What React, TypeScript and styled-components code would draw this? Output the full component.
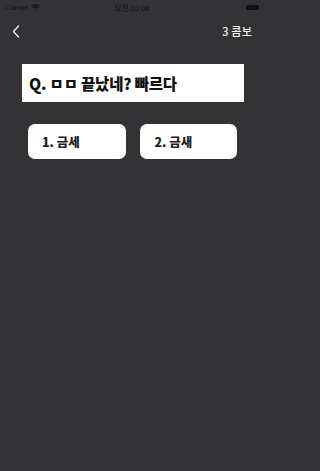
import React from "react";
import styled, { createGlobalStyle } from "styled-components";

const Global = createGlobalStyle`
  html, body { margin: 0; padding: 0; background: #333336; }
  body { font-family: "Noto Sans CJK KR", "Noto Sans", sans-serif; }
  * { box-sizing: border-box; }
`;

const Screen = styled.div`
  width: 265px;
  height: 471px;
  background: #333336;
  display: flex;
  flex-direction: column;
  overflow: hidden;
`;

const StatusBar = styled.div`
  height: 15px;
  display: grid;
  grid-template-columns: 1fr auto 1fr;
  align-items: center;
  padding: 0 6px 0 5px;
  color: #111113;
  font-family: "Liberation Sans", "Noto Sans CJK KR", sans-serif;
  font-size: 7.5px;
`;

const StatusLeft = styled.div`
  display: flex;
  align-items: center;
  gap: 3px;
`;

const StatusRight = styled.div`
  display: flex;
  justify-content: flex-end;
`;

const Battery = styled.div`
  width: 13px;
  height: 5px;
  border-radius: 1.5px;
  background: #111113;
`;

const NavBar = styled.div`
  height: 32px;
  display: flex;
  align-items: center;
  justify-content: space-between;
  padding: 0 13px 0 12px;
`;

const NavTitle = styled.span`
  color: #f2f2f2;
  font-size: 11px;
  font-weight: 500;
  letter-spacing: 0.2px;
`;

const Content = styled.div`
  display: flex;
  flex-direction: column;
  padding: 17px 21px 0 22px;
`;

const Question = styled.div`
  height: 38px;
  background: #ffffff;
  display: flex;
  align-items: center;
  padding: 0 0 0 7px;
  color: #111111;
  font-size: 15.5px;
  font-weight: 900;
  letter-spacing: -0.2px;
`;

const Answers = styled.div`
  display: flex;
  gap: 14px;
  margin-top: 22px;
  padding: 0 7px 0 6px;
`;

const Answer = styled.button<{ $pad: number }>`
  width: 98px;
  height: 35px;
  border: none;
  border-radius: 7px;
  background: #ffffff;
  display: flex;
  align-items: center;
  padding: 0 0 0 ${(p) => p.$pad}px;
  color: #222222;
  font-family: "Noto Sans CJK KR", "Noto Sans", sans-serif;
  font-size: 12.5px;
  font-weight: 900;
  cursor: pointer;
`;

export default function App() {
  return (
    <>
      <Global />
      <Screen>
        <StatusBar>
          <StatusLeft>
            <span>Carrier</span>
            <svg width="9" height="7" viewBox="0 0 9 7">
              <path d="M0.5 2.4 A6 6 0 0 1 8.5 2.4" stroke="#111113" strokeWidth="1.1" fill="none" />
              <path d="M2 3.9 A4 4 0 0 1 7 3.9" stroke="#111113" strokeWidth="1.1" fill="none" />
              <path d="M4.5 6.5 L3.3 5.2 A1.8 1.8 0 0 1 5.7 5.2 Z" fill="#111113" />
            </svg>
          </StatusLeft>
          <span>오전 10:08</span>
          <StatusRight>
            <Battery />
          </StatusRight>
        </StatusBar>
        <NavBar>
          <svg width="8" height="13" viewBox="0 0 8 13">
            <path d="M6.5 1 L1.5 6.5 L6.5 12" stroke="#f2f2f2" strokeWidth="1.3" fill="none" strokeLinecap="round" strokeLinejoin="round" />
          </svg>
          <NavTitle>3 콤보</NavTitle>
        </NavBar>
        <Content>
          <Question>Q. ㅁㅁ 끝났네? 빠르다</Question>
          <Answers>
            <Answer $pad={14}>1. 금세</Answer>
            <Answer $pad={15}>2. 금새</Answer>
          </Answers>
        </Content>
      </Screen>
    </>
  );
}
